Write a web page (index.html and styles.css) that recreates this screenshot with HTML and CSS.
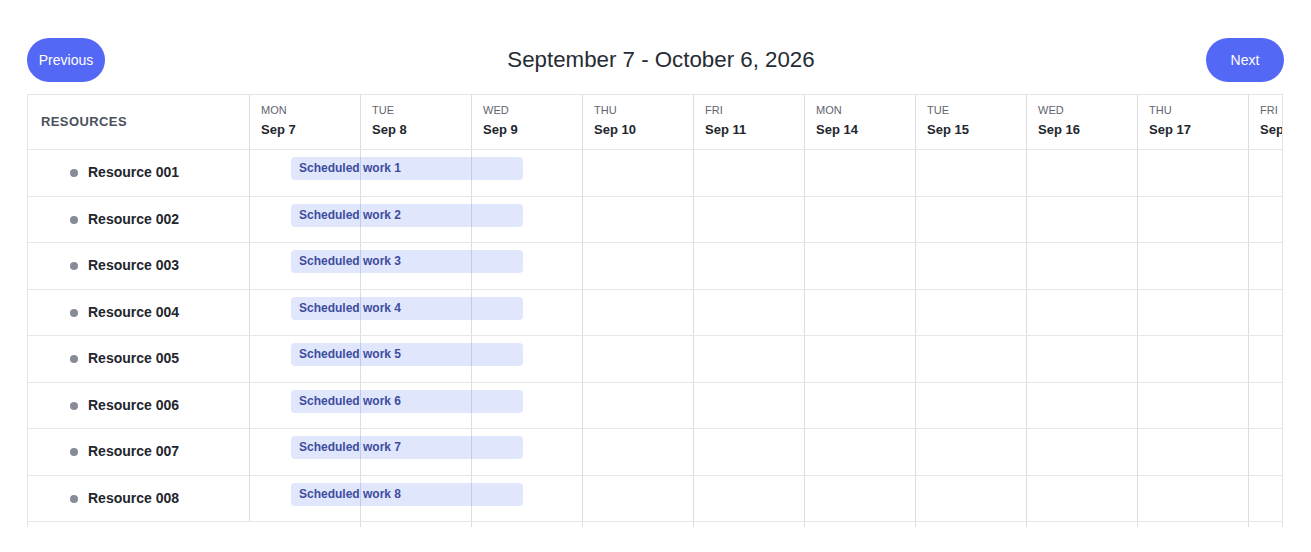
FILE: index.html
```html
<!DOCTYPE html>
<html lang="en">
<head>
    <meta charset="UTF-8">
    <meta name="viewport" content="width=device-width, initial-scale=1.0">
    <title>Resource schedule</title>
    <link rel="stylesheet" href="styles.css">
</head>
<body>

    <div class="page">
        <!-- top bar with paging -->
        <div class="toolbar">
            <button class="nav-btn">Previous</button>
            <h2 class="range-title">September 7 - October 6, 2026</h2>
            <button class="nav-btn">Next</button>
        </div>

        <div class="scheduler">
            <!-- header row -->
            <div class="sched-row head-row">
                <div class="res-cell res-head">RESOURCES</div>
                <div class="days">
                    <div class="day-head"><span class="dow">MON</span><span class="date">Sep 7</span></div>
                    <div class="day-head"><span class="dow">TUE</span><span class="date">Sep 8</span></div>
                    <div class="day-head"><span class="dow">WED</span><span class="date">Sep 9</span></div>
                    <div class="day-head"><span class="dow">THU</span><span class="date">Sep 10</span></div>
                    <div class="day-head"><span class="dow">FRI</span><span class="date">Sep 11</span></div>
                    <div class="day-head"><span class="dow">MON</span><span class="date">Sep 14</span></div>
                    <div class="day-head"><span class="dow">TUE</span><span class="date">Sep 15</span></div>
                    <div class="day-head"><span class="dow">WED</span><span class="date">Sep 16</span></div>
                    <div class="day-head"><span class="dow">THU</span><span class="date">Sep 17</span></div>
                    <div class="day-head"><span class="dow">FRI</span><span class="date">Sep 18</span></div>
                </div>
            </div>

            <div class="sched-body" id="sched-body"></div>
        </div>
    </div>

    <script>
        // build the resource rows
        const body = document.getElementById('sched-body');
        function dayCells() {
            let cells = '';
            for (let d = 0; d < 10; d++) {
                cells += '<div class="day-cell"></div>';
            }
            return cells;
        }
        for (let i = 1; i <= 8; i++) {
            const num = String(i).padStart(3, '0');
            body.insertAdjacentHTML('beforeend',
                '<div class="sched-row">' +
                    '<div class="res-cell"><span class="dot"></span>Resource ' + num + '</div>' +
                    '<div class="days">' + dayCells() +
                        '<div class="event">Scheduled work ' + i + '</div>' +
                    '</div>' +
                '</div>');
        }
        // the next row, only its top edge shows under the fold
        body.insertAdjacentHTML('beforeend',
            '<div class="sched-row filler">' +
                '<div class="res-cell"></div>' +
                '<div class="days">' + dayCells() + '</div>' +
            '</div>');
    </script>
</body>
</html>
```

FILE: styles.css
```css
body {
    font-family: "Liberation Sans", Arial, sans-serif;
    margin: 0;
    padding: 0;
    background-color: #fff;
    color: #222;
}
.page {
    padding: 38px 27px 0 27px;
}
.toolbar {
    display: flex;
    justify-content: space-between;
    align-items: center;
    margin-bottom: 12px;
}
.nav-btn {
    height: 44px;
    width: 78px;
    border: none;
    border-radius: 22px;
    background-color: #5468f6;
    color: white;
    font-family: inherit;
    font-size: 14px;
    cursor: pointer;
}
.range-title {
    margin: 0 0 0 11px;
    font-size: 22.3px;
    font-weight: normal;
    color: #262b33;
}
.scheduler {
    width: 1256px;
    height: 433px;
    overflow: hidden;
    border-top: 1px solid #e3e4ea;
    border-left: 1px solid #e3e4ea;
    border-right: 1px solid #e3e4ea;
    box-sizing: border-box;
}
.sched-row {
    display: flex;
    height: 46.5px;
    border-bottom: 1px solid #e6e7ec;
    box-sizing: border-box;
}
.head-row {
    height: 55px;
}
.filler .res-cell {
    border-right: none;
    background-color: #fff;
}
.res-cell {
    flex: 0 0 222px;
    box-sizing: border-box;
    border-right: 1px solid #dcdde4;
    display: flex;
    align-items: center;
    padding-left: 42px;
    padding-bottom: 1px;
    font-size: 14px;
    font-weight: bold;
    color: #23262d;
}
.res-head {
    padding-left: 13px;
    font-size: 13px;
    color: #4b505c;
    letter-spacing: 0.4px;
}
.dot {
    width: 8px;
    height: 8px;
    border-radius: 50%;
    background-color: #868b98;
    margin-right: 10px;
    margin-top: 2px;
}
.days {
    position: relative;
    display: flex;
    flex: 0 0 auto;
}
.day-head, .day-cell {
    flex: 0 0 111px;
    box-sizing: border-box;
    border-right: 1px solid #dcdde4;
}
.day-head {
    display: flex;
    flex-direction: column;
    padding: 9px 0 0 11px;
}
.dow {
    font-size: 11px;
    color: #5f6470;
    margin-bottom: 6px;
}
.date {
    font-size: 13px;
    font-weight: bold;
    color: #23262d;
}

/* bar over the day grid */
.event {
    position: absolute;
    left: 41px;
    top: 7px;
    width: 232px;
    height: 23px;
    line-height: 23px;
    box-sizing: border-box;
    padding-left: 8px;
    border-radius: 4px;
    background-color: rgba(92, 126, 240, 0.19);
    color: #3e4c9e;
    font-size: 12px;
    font-weight: bold;
}
```
